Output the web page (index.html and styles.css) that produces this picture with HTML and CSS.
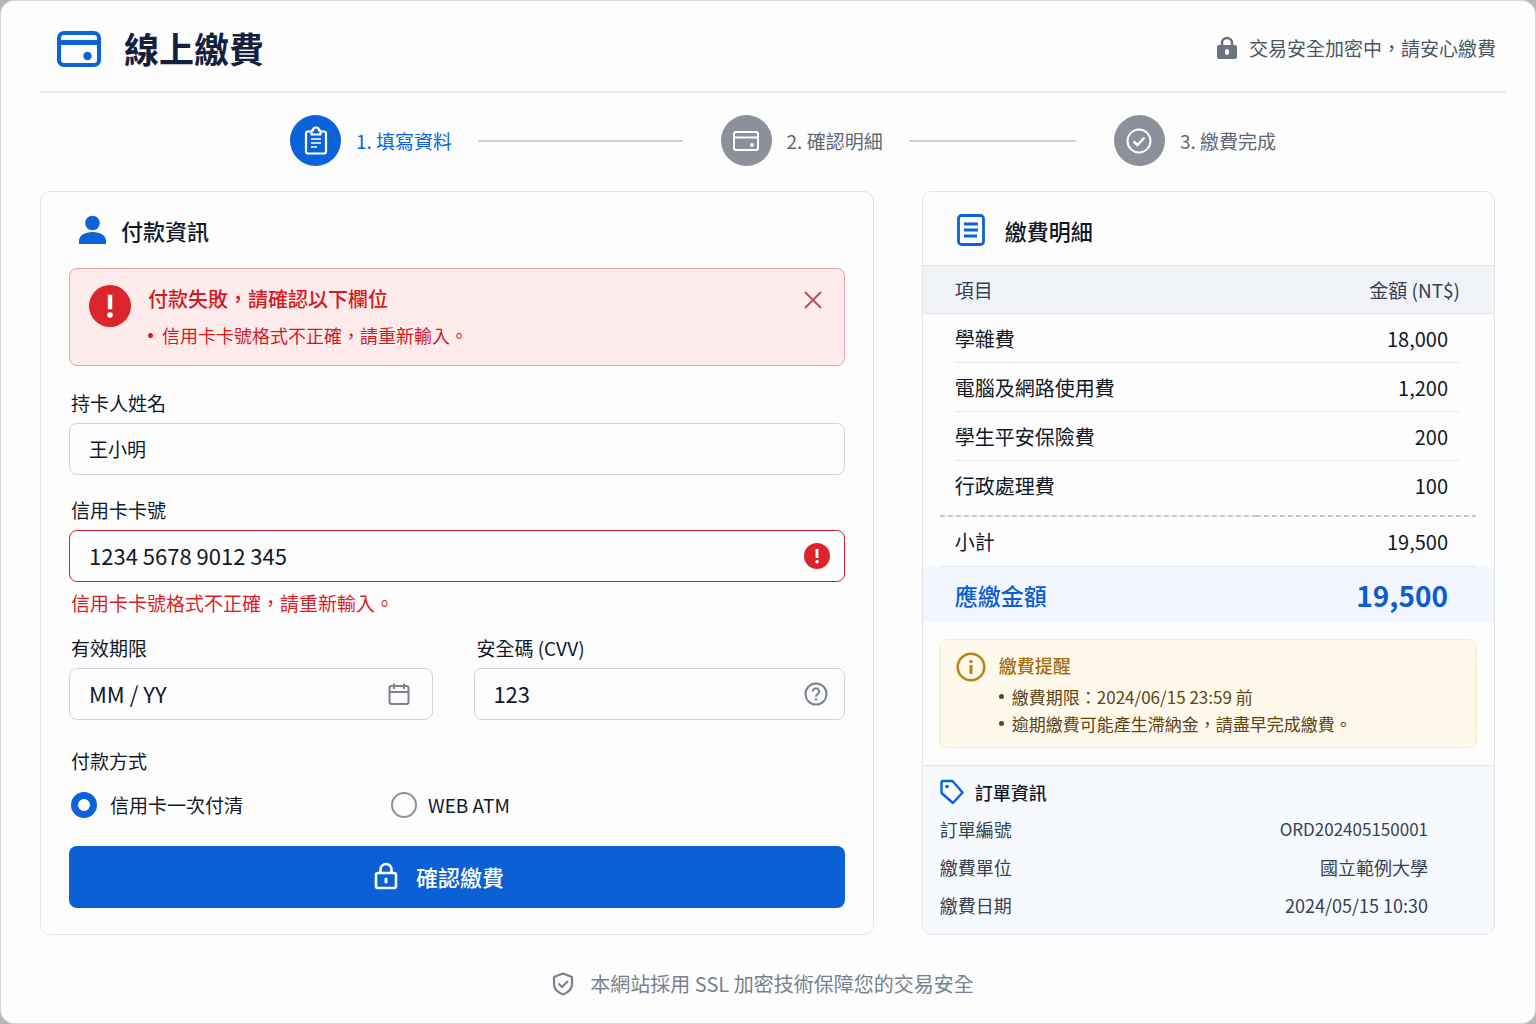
FILE: index.html
```html
<!DOCTYPE html>
<html lang="zh-Hant">
<head>
  <meta charset="UTF-8">
  <meta name="viewport" content="width=device-width, initial-scale=1">
  <title>線上繳費</title>
  <link rel="stylesheet" href="styles.css">
</head>
<body>
<div class="app">

  <header class="header">
    <svg class="logo" width="44" height="38" viewBox="0 0 44 38" fill="none" stroke="currentColor" stroke-width="4">
      <rect x="2" y="3" width="40" height="32" rx="5"/>
      <path d="M2 12.5h40" stroke-width="5"/>
      <circle cx="30.5" cy="26" r="4.2" fill="currentColor" stroke="none"/>
    </svg>
    <h1>線上繳費</h1>
    <div class="secure">
      <svg width="20" height="24" viewBox="0 0 20 24">
        <path d="M5 10V7a5 5 0 0 1 10 0v3" fill="none" stroke="currentColor" stroke-width="2.5"/>
        <path fill="currentColor" fill-rule="evenodd" d="M2 9h16a2 2 0 0 1 2 2v10a2 2 0 0 1-2 2H2a2 2 0 0 1-2-2V11a2 2 0 0 1 2-2zm8 4a2 2 0 0 0-2 2v2a2 2 0 0 0 4 0v-2a2 2 0 0 0-2-2z"/>
      </svg>
      <span>交易安全加密中，請安心繳費</span>
    </div>
  </header>

  <nav class="steps">
    <div class="step active">
      <span class="step-icon">
        <svg width="26" height="30" viewBox="0 0 26 30" fill="none" stroke="currentColor" stroke-width="2.2" stroke-linejoin="round">
          <path d="M8 5.5H5A2 2 0 0 0 3 7.5v18a2 2 0 0 0 2 2h16a2 2 0 0 0 2-2v-18a2 2 0 0 0-2-2h-3"/>
          <path d="M8.500 4.500H10a3 3 0 0 1 6 0h1.500v4h-9z"/>
          <path d="M8 13h10M8 17h10M8 21h6" stroke-width="1.7"/>
        </svg>
      </span>
      <span>1. 填寫資料</span>
    </div>
    <span class="line line-first"></span>
    <div class="step">
      <span class="step-icon">
        <svg width="26" height="22" viewBox="0 0 26 22" fill="none" stroke="currentColor" stroke-width="2">
          <rect x="1" y="2" width="24" height="18" rx="2"/>
          <path d="M1 7.5h24"/>
          <circle cx="19" cy="15" r="1.9" fill="currentColor" stroke="none"/>
        </svg>
      </span>
      <span>2. 確認明細</span>
    </div>
    <span class="line line-second"></span>
    <div class="step">
      <span class="step-icon">
        <svg width="26" height="26" viewBox="0 0 26 26" fill="none" stroke="currentColor" stroke-width="2">
          <circle cx="13" cy="13" r="11.5"/>
          <path d="M7.5 13.5l4 3.5 7-7.5" stroke-width="2.4"/>
        </svg>
      </span>
      <span>3. 繳費完成</span>
    </div>
  </nav>

  <main class="content">
    <form class="panel payment">
      <h2>
        <svg width="27" height="30" viewBox="0 0 27 30" fill="currentColor">
          <circle cx="13.5" cy="8" r="7.3"/>
          <path d="M0 29v-3c0-5.5 5.5-9 13.5-9S27 20.5 27 26v3z"/>
        </svg>
        付款資訊
      </h2>

      <div class="alert" role="alert">
        <svg width="42" height="42" viewBox="0 0 42 42">
          <circle cx="21" cy="21" r="21" fill="#d9252b"/>
          <path d="M21 12v10" stroke="#fff" stroke-width="4.5"  stroke-linecap="square"/>
          <circle cx="21" cy="30" r="2.8" fill="#fff"/>
        </svg>
        <div class="alert-body">
          <strong>付款失敗，請確認以下欄位</strong>
          <ul>
            <li>信用卡卡號格式不正確，請重新輸入。</li>
          </ul>
        </div>
        <button type="button" class="icon-button close" aria-label="關閉">
          <svg width="18" height="18" viewBox="0 0 18 18" stroke="currentColor" stroke-width="2" stroke-linecap="round">
            <path d="M1.5 1.5l15 15M16.5 1.5l-15 15"/>
          </svg>
        </button>
      </div>

      <div class="field">
        <label for="holder">持卡人姓名</label>
        <div class="control">
          <input type="text" id="holder" class="name-input" value="王小明">
        </div>
      </div>

      <div class="field">
        <label for="card">信用卡卡號</label>
        <div class="control invalid">
          <input type="text" id="card" value="1234 5678 9012 345" aria-describedby="cardError">
          <svg width="26" height="26" viewBox="0 0 26 26">
            <circle cx="13" cy="13" r="13" fill="#d9252b"/>
            <path d="M13 6v9" stroke="#fff" stroke-width="2.8"/>
            <circle cx="13" cy="18.7" r="1.7" fill="#fff"/>
          </svg>
        </div>
        <p class="error" id="cardError">信用卡卡號格式不正確，請重新輸入。</p>
      </div>

      <div class="field-row">
        <div class="field">
          <label for="expiry">有效期限</label>
          <div class="control expiry">
            <input type="text" id="expiry" value="MM / YY">
            <button type="button" class="icon-button" aria-label="選擇日期">
              <svg width="22" height="24" viewBox="0 0 22 24" fill="none" stroke="currentColor" stroke-width="2">
                <rect x="1.5" y="4" width="19" height="18" rx="2"/>
                <path d="M1.5 10h19M6 1.5V7M16 1.5V7"/>
              </svg>
            </button>
          </div>
        </div>
        <div class="field">
          <label for="cvv">安全碼 (CVV)</label>
          <div class="control cvv">
            <input type="text" id="cvv" value="123">
            <button type="button" class="icon-button" aria-label="安全碼說明">
              <svg width="24" height="24" viewBox="0 0 24 24" fill="none" stroke="currentColor" stroke-width="2">
                <circle cx="12" cy="12" r="10.5"/>
                <path d="M8.8 9.5a3.2 3.2 0 1 1 5 2.6c-1.2.8-1.8 1.300-1.8 2.600"/>
                <circle cx="12" cy="17.5" r="1.3" fill="currentColor" stroke="none"/>
              </svg>
            </button>
          </div>
        </div>
      </div>

      <fieldset class="methods">
        <legend>付款方式</legend>
        <div class="options">
          <label><input type="radio" name="method" checked> 信用卡一次付清</label>
          <label class="atm"><input type="radio" name="method"> WEB ATM</label>
        </div>
      </fieldset>

      <button type="submit" class="submit">
        <svg width="24" height="28" viewBox="0 0 24 28" fill="none" stroke="currentColor" stroke-width="2.6">
          <rect x="2" y="11" width="20" height="15" rx="2"/>
          <path d="M6.5 11V7.5a5.5 5.5 0 0 1 11 0V11"/>
          <path d="M12 17v3" stroke-width="3" stroke-linecap="round"/>
        </svg>
        確認繳費
      </button>
    </form>

    <section class="panel details">
      <h2>
        <svg width="28" height="32" viewBox="0 0 28 32" fill="none" stroke="currentColor" stroke-width="2.8">
          <rect x="1.5" y="1.5" width="25" height="29" rx="3"/>
          <path d="M7 10h14M7 16h14M7 22h13"/>
        </svg>
        繳費明細
      </h2>

      <table class="fees">
        <thead>
          <tr><th>項目</th><th>金額 (NT$)</th></tr>
        </thead>
        <tbody>
          <tr><td>學雜費</td><td>18,000</td></tr>
          <tr><td>電腦及網路使用費</td><td>1,200</td></tr>
          <tr><td>學生平安保險費</td><td>200</td></tr>
          <tr class="last-item"><td>行政處理費</td><td>100</td></tr>
          <tr class="subtotal"><td>小計</td><td>19,500</td></tr>
        </tbody>
        <tfoot>
          <tr><td>應繳金額</td><td>19,500</td></tr>
        </tfoot>
      </table>

      <div class="reminder">
        <svg width="30" height="30" viewBox="0 0 30 30" fill="none" stroke="#b9821b" stroke-width="2.5">
          <circle cx="15" cy="15" r="13.3"/>
          <path d="M15 13v9" stroke-width="3"/>
          <circle cx="15" cy="9.5" r="1.7" fill="#b9821b" stroke="none"/>
        </svg>
        <div>
          <strong>繳費提醒</strong>
          <ul>
            <li>繳費期限：2024/06/15 23:59 前</li>
            <li>逾期繳費可能產生滯納金，請盡早完成繳費。</li>
          </ul>
        </div>
      </div>

      <div class="order">
        <h3>
          <svg width="24" height="26" viewBox="0 0 24 26" fill="none" stroke="#0b62d9" stroke-width="2.4" stroke-linejoin="round">
            <path d="M1.5 3.5a1.5 1.5 0 0 1 1.5-1.5h9.5L22.5 13.500 13 24 1.500 14z"/>
            <circle cx="7" cy="7.5" r="1.8" fill="#0b62d9" stroke="none"/>
          </svg>
          訂單資訊
        </h3>
        <dl>
          <dt>訂單編號</dt><dd class="order-no">ORD202405150001</dd>
          <dt>繳費單位</dt><dd>國立範例大學</dd>
          <dt>繳費日期</dt><dd>2024/05/15 10:30</dd>
        </dl>
      </div>
    </section>
  </main>

  <footer class="footer">
    <svg width="22" height="24" viewBox="0 0 22 24" fill="none" stroke="currentColor" stroke-width="2.2" stroke-linejoin="round">
      <path d="M11 1.5l9 3.5v7c0 5-4 8.5-9 10.5C6 20.5 2 17 2 12V5z"/>
      <path d="M6.5 11.5l3.5 3.5 6-6"/>
    </svg>
    <span>本網站採用 SSL 加密技術保障您的交易安全</span>
  </footer>

</div>
</body>
</html>
```

FILE: styles.css
```css
* {
  box-sizing: border-box;
}
body {
  margin: 0;
  background: #b4b7bc;
  color: #111827;
  font-family: "Noto Sans CJK TC", "Noto Sans", sans-serif;
  font-size: 19px;
  line-height: 28px;
}
h1, h2, h3, p, ul, dl, dd {
  margin: 0;
  padding: 0;
}
svg {
  flex: none;
  display: block;
}
button, input {
  font-family: inherit;
  color: inherit;
}
.app {
  min-height: 100vh;
  background: #fdfdfe;
  border: 1px solid #d5d9df;
  border-radius: 14px;
}

/* header */
.header {
  display: flex;
  align-items: center;
  height: 92px;
  margin: 0 29px 0 39px;
  padding: 6px 10px 0 17px;
  border-bottom: 2px solid #e7eaef;
}
.logo {
  color: #0b62d9;
}
.header h1 {
  margin: 0 0 2px 23px;
  font-size: 35px;
  line-height: 48px;
  font-weight: 700;
  color: #14213d;
}
.secure {
  display: flex;
  align-items: center;
  gap: 12px;
  margin: 0 0 2px auto;
  color: #4b5563;
}
.secure svg {
  color: #6b7280;
}

/* steps */
.steps {
  display: flex;
  align-items: center;
  padding: 22px 259px 25px 289px;
}
.step {
  display: flex;
  align-items: center;
  gap: 15px;
  color: #5f6775;
}
.step.active {
  color: #0b62d9;
}
.step-icon {
  display: flex;
  align-items: center;
  justify-content: center;
  width: 51px;
  height: 51px;
  border-radius: 50%;
  background: #8b909a;
  color: #fff;
}
.active .step-icon {
  background: #0b62d9;
}
.line {
  height: 2px;
  margin: 0 38px 0 26px;
  background: #cdd1d7;
}
.line-first {
  flex: 11;
}
.line-second {
  flex: 9;
}

/* panels */
.content {
  display: grid;
  grid-template-columns: 16fr 11fr;
  gap: 48px;
  padding: 0 40px 0 39px;
}
.panel {
  border: 1px solid #e1e4ea;
  border-radius: 10px;
  overflow: hidden;
}
.panel h2 {
  display: flex;
  align-items: center;
  font-size: 22px;
  font-weight: 500;
}
.panel h2 svg {
  color: #0b62d9;
}

/* payment form */
.payment {
  padding: 0 28px 26px;
}
.payment h2 {
  height: 76px;
  gap: 15px;
  padding-left: 10px;
}
.alert {
  display: flex;
  align-items: flex-start;
  margin-bottom: 23px;
  padding: 16px 22px 16px 19px;
  border: 1px solid #f29ca1;
  border-radius: 8px;
  background: #feeced;
  color: #d4191f;
}
.alert-body {
  flex: 1;
  margin-left: 17px;
}
.alert strong {
  display: block;
  font-size: 20px;
  font-weight: 500;
}
.alert ul, .reminder ul {
  list-style: none;
}
.alert ul {
  margin-top: 8px;
  font-size: 18px;
}
.alert li, .reminder li {
  display: flex;
  align-items: center;
}
.alert li::before, .reminder li::before {
  content: "";
  width: 5px;
  height: 5px;
  margin-right: 9px;
  border-radius: 50%;
  background: currentColor;
}
.icon-button {
  display: flex;
  padding: 0;
  border: 0;
  background: none;
  color: #7a828e;
  cursor: pointer;
}
.close {
  margin-top: 6px;
  color: #b9535b;
}
.field {
  margin-bottom: 21px;
}
.field label {
  display: block;
  margin-bottom: 6px;
  padding-left: 2px;
}
.control {
  display: flex;
  align-items: center;
  height: 52px;
  padding: 0 14px 0 19px;
  border: 1px solid #cfd4dc;
  border-radius: 8px;
}
.control.invalid {
  border-color: #dc1f26;
}
.control.expiry {
  padding-right: 22px;
}
.control.cvv {
  padding: 0 16px 0 18px;
}
.control input {
  flex: 1;
  min-width: 0;
  padding: 0 0 2px;
  border: 0;
  outline: none;
  background: none;
  font-size: 22px;
}
.control .name-input {
  font-size: 19px;
}
.error {
  margin: 7px 0 -4px;
  padding-left: 2px;
  color: #d91f26;
}
.field-row {
  display: grid;
  grid-template-columns: 364fr 370fr;
  gap: 41px;
}
.field-row .field {
  margin-bottom: 27px;
}
.methods {
  margin: 0 0 27px;
  padding: 0;
  border: 0;
}
.methods legend {
  padding: 0 0 0 2px;
}
.options {
  display: grid;
  grid-template-columns: 320px 1fr;
  margin-top: 16px;
  padding-left: 2px;
}
.options label {
  display: flex;
  align-items: center;
  gap: 13px;
}
.options input {
  appearance: none;
  width: 26px;
  height: 26px;
  margin: 0;
  border: 2px solid #8b929c;
  border-radius: 50%;
}
.options input:checked {
  border: 7px solid #0b62d9;
}
.options .atm {
  gap: 11px;
}
.submit {
  display: flex;
  align-items: center;
  justify-content: center;
  gap: 18px;
  width: 100%;
  height: 62px;
  padding: 0 36px 2px 0;
  border: 0;
  border-radius: 8px;
  background: #0b60d5;
  color: #fff;
  font-size: 22px;
  font-weight: 500;
  cursor: pointer;
}

/* fee details */
.details {
  display: flex;
  flex-direction: column;
}
.details h2 {
  height: 73px;
  gap: 20px;
  padding: 3px 0 0 34px;
}
.fees {
  width: 100%;
  border-spacing: 0;
  font-size: 20px;
}
.fees th, .fees td {
  height: 49px;
  padding: 0 46px 0 32px;
  text-align: left;
}
.fees th:last-child, .fees td:last-child {
  text-align: right;
}
.fees th {
  border-top: 1px solid #e4e8ed;
  border-bottom: 1px solid #e4e8ed;
  background: #f0f3f8;
  color: #374151;
  font-size: 19px;
  font-weight: 400;
}
.fees th:last-child {
  padding-right: 34px;
}
/* row lines stop short of the panel edges */
.fees tbody td {
  background: linear-gradient(#e6e9ee, #e6e9ee) no-repeat right bottom / calc(100% - 32px) 1px;
}
.fees tbody td:last-child {
  background-position: left bottom;
  background-size: calc(100% - 34px) 1px;
}
.fees tbody .last-item td {
  height: 56px;
  padding-bottom: 7px;
  background-image: repeating-linear-gradient(90deg, #c3c7ce 0 5px, transparent 5px 8px);
  background-size: calc(100% - 17px) 2px;
}
.fees tbody .last-item td:last-child {
  background-size: calc(100% - 18px) 2px;
}
.fees tbody .subtotal td {
  height: 50px;
  background-size: calc(100% - 17px) 1px;
}
.fees tfoot td {
  height: 55px;
  background: #f2f6fe;
  color: #0b5cd5;
  font-size: 23px;
  font-weight: 500;
}
.fees tfoot td:last-child {
  font-size: 28px;
  font-weight: 700;
}
.reminder {
  display: flex;
  align-items: flex-start;
  gap: 13px;
  margin: 17px 17px 17px 16px;
  padding: 12px 16px 10px;
  border: 1px solid #fbebc8;
  border-radius: 8px;
  background: #fff9ec;
  color: #5f4413;
  font-size: 17px;
  line-height: 27px;
}
.reminder strong {
  display: block;
  margin-bottom: 4px;
  color: #a86d0c;
  font-size: 18px;
  font-weight: 500;
}
.reminder li::before {
  margin-right: 8px;
}
.order {
  flex: 1;
  padding: 7px 66px 9px 17px;
  border-top: 1px solid #e1e5eb;
  background: #f6f9fd;
}
.order h3 {
  display: flex;
  align-items: center;
  gap: 11px;
  height: 37px;
  font-size: 18px;
  font-weight: 500;
}
.order dl {
  display: grid;
  grid-template-columns: auto auto;
  justify-content: space-between;
  color: #374151;
  font-size: 18px;
  line-height: 38px;
}
.order dd {
  text-align: right;
}
.order .order-no {
  font-size: 17px;
}

.footer {
  display: flex;
  align-items: center;
  justify-content: center;
  gap: 16px;
  padding: 35px 10px 25px 0;
  color: #7a818d;
  font-size: 20px;
}
```
